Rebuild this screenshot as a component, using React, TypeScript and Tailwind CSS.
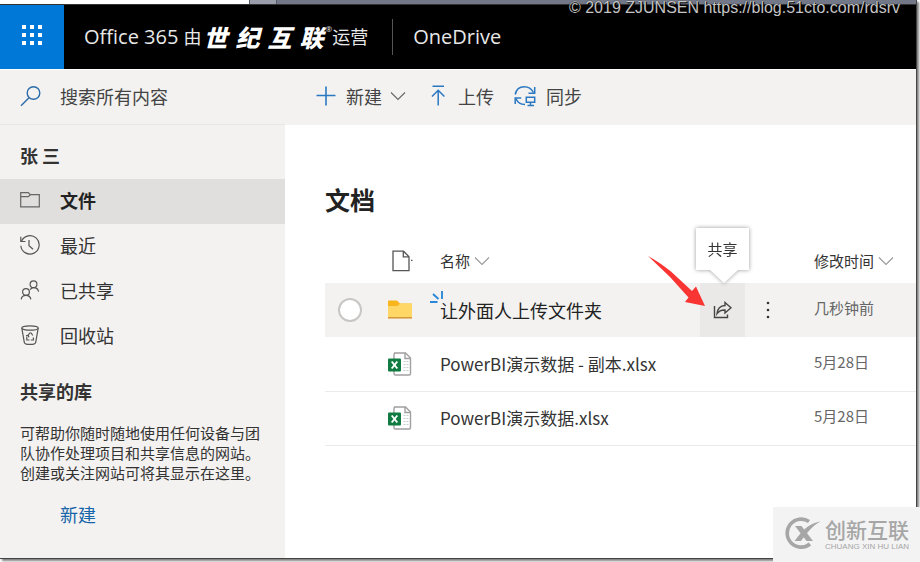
import React from "react";

const cjk = "font-['Noto_Sans_CJK_SC',sans-serif]";
const latin = "font-['Open_Sans','Noto_Sans_CJK_SC',sans-serif]";

function WaffleIcon() {
  return (
    <svg width="20" height="20" viewBox="0 0 20 20" fill="#fff" aria-hidden="true">
      {[0, 8, 16].map((y) => [0, 8, 16].map((x) => <rect key={`${x}-${y}`} x={x} y={y} width="4" height="4" />))}
    </svg>
  );
}

function SearchIcon() {
  return (
    <svg width="22" height="22" viewBox="0 0 22 22" fill="none" stroke="#2b6ca8" strokeWidth="1.4" aria-hidden="true">
      <circle cx="13.5" cy="8" r="6.3" />
      <path d="M9 12.7 1 20.8" />
    </svg>
  );
}

function Chevron({ color }: { color: string }) {
  return (
    <svg width="16" height="10" viewBox="0 0 16 10" fill="none" stroke={color} strokeWidth="1.1" aria-hidden="true">
      <path d="M1 1.5 8 8.5 15 1.5" />
    </svg>
  );
}

function PlusIcon() {
  return (
    <svg width="20" height="20" viewBox="0 0 20 20" stroke="#2b78c2" strokeWidth="1.6" aria-hidden="true">
      <path d="M10 0.5V19.5M0.5 9.5H19.5" />
    </svg>
  );
}

function UploadIcon() {
  return (
    <svg width="16" height="21" viewBox="0 0 16 21" fill="none" stroke="#2b78c2" strokeWidth="1.5" aria-hidden="true">
      <path d="M2.5 1.2H14M8.2 20.5V5.5M2 11.5 8.2 5.2 14.4 11.5" />
    </svg>
  );
}

function SyncIcon() {
  return (
    <svg width="22" height="22" viewBox="0 0 22 22" fill="none" stroke="#2b78c2" strokeWidth="1.5" aria-hidden="true">
      <path d="M1.2 9.5C2.2 4.5 6 1.8 10.3 1.8c4 0 7.2 2 9.2 5.7" />
      <path d="M20.7 2v6.2h-6.2" />
      <path d="M1.2 19v-6h6" />
      <path d="M1.8 13.5c1.6 3.6 4.6 6 9.2 6" />
      <path d="M12.3 12.3h8.4v5h-8.4zM16.5 17.3v3M13.5 20.5h6.5" />
    </svg>
  );
}

function FolderOutline() {
  return (
    <svg width="20" height="20" viewBox="0 0 20 20" fill="none" stroke="#666" strokeWidth="1.2" aria-hidden="true">
      <path d="M.7 2.700h7.600l2 2h9v12.200H.7z" />
      <path d="M.7 6.600h7.600l2-1.900" />
    </svg>
  );
}

function RecentIcon() {
  return (
    <svg width="20" height="20" viewBox="0 0 20 20" fill="none" stroke="#555" strokeWidth="1.2" aria-hidden="true">
      <path d="M1.500 6.200A9.200 9.200 0 1 1 .8 10.800" />
      <path d="M.8 1.800v4.700h4.700" />
      <path d="M9 5v5.700l4 3.600" />
    </svg>
  );
}

function SharedIcon() {
  return (
    <svg width="20" height="20" viewBox="0 0 20 20" fill="none" stroke="#555" strokeWidth="1.2" aria-hidden="true">
      <circle cx="13.500" cy="4.200" r="3.400" />
      <circle cx="6" cy="12" r="3.400" />
      <path d="M1.200 19.400c.3-2.600 2.200-4 4.800-4s4.400 1.400 4.900 4M10.200 9.600c.8-1.300 1.900-2 3.300-2 2.700 0 4.600 1.400 5.100 4" />
    </svg>
  );
}

function RecycleIcon() {
  return (
    <svg width="20" height="20" viewBox="0 0 20 20" fill="none" stroke="#555" strokeWidth="1.2" aria-hidden="true">
      <ellipse cx="10" cy="3" rx="8.200" ry="2.200" />
      <path d="M1.800 3.200 4.300 17.300c.4 2.700 11 2.700 11.400 0L18.200 3.200" />
      <path d="M8 10.500 9.700 8h1.500l1.600 2.500M6.800 12v3h2.700M10.800 15h2.600v-2.500M6 10.800l2.200-.5.7 2" />
    </svg>
  );
}

function DocOutline() {
  return (
    <svg width="22" height="22" viewBox="0 0 22 22" fill="none" stroke="#555" strokeWidth="1.3" aria-hidden="true">
      <path d="M1 1.200h10.500l5.500 5.500v14H1z" />
      <path d="M11.300 1.200v5.700H17" />
      <path d="M19 10.300h1.500" />
    </svg>
  );
}

function FolderIcon() {
  return (
    <svg width="24" height="20" viewBox="0 0 24 20" aria-hidden="true">
      <path d="M0 1.500Q0 .5 1 .5h8l3 3h11q1 0 1 1V15H0z" fill="#f8b51c" />
      <path d="M0 6h9.500l2.500-2.500h11q1 0 1 1V18H0z" fill="#fed766" />
      <path d="M0 17h24v1.600H0z" fill="#d99a3c" />
    </svg>
  );
}

function ExcelIcon() {
  return (
    <svg width="24" height="24" viewBox="0 0 24 24" fill="none" aria-hidden="true">
      <path d="M6 1h11.500l5 5v15.500q0 1.500-1.500 1.500H7.500Q6 23 6 21.500V2.500Q6 1 7.500 1z" fill="#fff" stroke="#a19fa0" strokeWidth="1.400" />
      <path d="M17 1v5.500h5.500" stroke="#a19fa0" strokeWidth="1.400" />
      <path d="M15.500 9.500h2M15.500 12.500h2M15.500 15.500h2M15.500 18.500h2M18.500 9.500h2M18.500 12.500h2M18.500 15.500h2M18.500 18.500h2" stroke="#c5d0ca" />
      <rect x="0" y="6.500" width="13" height="13" rx="1" fill="#107c41" />
      <path d="M3.700 9.500 9.300 16.500M9.300 9.500 3.700 16.500" stroke="#fff" strokeWidth="1.900" />
    </svg>
  );
}

function NewMark() {
  return (
    <svg className="absolute -top-1.5 -left-2.5" width="14" height="16" viewBox="0 0 14 16" stroke="#2b88d8" strokeWidth="1.900" aria-hidden="true">
      <path d="M0 12h7.500M3 4l5.500 5M12 1v8" />
    </svg>
  );
}

function ShareIcon() {
  return (
    <svg width="19" height="18" viewBox="0 0 19 18" fill="none" stroke="#444" strokeWidth="1.400" aria-hidden="true">
      <path d="M1.500 5v11.500h13v-3" />
      <path d="M12 1.500 18 6.700 12 12V9c-3.600-.2-6 1-8 3.700C4.500 8 7 4.800 12 4.500z" />
    </svg>
  );
}

function MoreIcon() {
  return (
    <svg width="4" height="18" viewBox="0 0 4 18" fill="#333" aria-hidden="true">
      <circle cx="2" cy="2" r="1.300" />
      <circle cx="2" cy="9" r="1.300" />
      <circle cx="2" cy="16" r="1.300" />
    </svg>
  );
}

function RedArrow() {
  return (
    <svg className="pointer-events-none absolute -top-7 right-10" width="58" height="52" viewBox="0 0 58 52" aria-hidden="true">
      <path d="M1 1C10 6 17 11 24 16.500L45 36l4-4.500L58 51l-20-4 3.500-4.500L23 22z" fill="#f93534" />
    </svg>
  );
}

const navItems = [
  { label: "文件", icon: <FolderOutline />, active: true },
  { label: "最近", icon: <RecentIcon />, active: false },
  { label: "已共享", icon: <SharedIcon />, active: false },
  { label: "回收站", icon: <RecycleIcon />, active: false },
];

const files = [
  { name: "PowerBI演示数据 - 副本.xlsx", date: "5月28日" },
  { name: "PowerBI演示数据.xlsx", date: "5月28日" },
];

function Header() {
  return (
    <header className={`flex h-16 items-center bg-black text-white ${latin}`}>
      <button type="button" aria-label="应用启动器" className="flex h-16 w-16 items-center justify-center bg-[#0078d7] pb-1">
        <WaffleIcon />
      </button>
      <div className="ml-5 flex items-center text-xl leading-7 text-[#e8e8e8]">
        <span className="whitespace-pre">Office 365 </span>
        <span className="text-lg">由</span>
        <span className={`flex gap-2 pl-0.5 text-2xl leading-7 font-black text-white italic ${cjk}`}>
          <span>世</span>
          <span>纪</span>
          <span>互</span>
          <span>联</span>
        </span>
        <span className="self-start pl-0.5 text-[8px] leading-3">®</span>
        <span className="text-lg">运营</span>
      </div>
      <div className="ml-6 h-9 w-px bg-[#555]" />
      <a href="#onedrive" className="ml-5 text-xl leading-7 text-[#e8e8e8]">OneDrive</a>
    </header>
  );
}

function Sidebar() {
  return (
    <aside className="w-[285px] shrink-0 bg-[#f3f2f1] text-[#333]">
      <label className="flex h-[55px] items-center gap-[18px] border-b border-[#e8e7e6] pb-0.5 pl-5">
        <SearchIcon />
        <input type="text" aria-label="搜索所有内容" placeholder="搜索所有内容" className="w-48 bg-transparent text-lg leading-7 outline-none placeholder:text-[#444]" />
      </label>
      <h2 className="mt-4 mb-2.5 px-5 text-lg leading-7 font-bold">张 三</h2>
      <nav>
        {navItems.map((item) => (
          <a
            key={item.label}
            href="#nav"
            className={
              item.active
                ? "flex h-[45px] items-center gap-5 bg-[#e0dfde] px-5 pb-1 text-lg leading-7 font-bold text-[#222]"
                : "flex h-[45px] items-center gap-5 px-5 pb-1 text-lg leading-7"
            }
          >
            {item.icon}
            {item.label}
          </a>
        ))}
      </nav>
      <h3 className="mt-[18px] px-5 text-lg leading-7 font-bold">共享的库</h3>
      <p className="mt-[18px] px-5 text-[15px] leading-5">
        可帮助你随时随地使用任何设备与团队协作处理项目和共享信息的网站。创建或关注网站可将其显示在这里。
      </p>
      <a href="#new" className="mt-[17px] ml-[60px] inline-block text-lg leading-7 text-[#1565a8]">新建</a>
    </aside>
  );
}

function Toolbar() {
  const button = "flex items-center text-lg leading-7 text-[#444]";
  return (
    <div className="flex h-[55px] items-center bg-[#f3f2f1] pb-1 pl-[31px]">
      <button type="button" className={button}>
        <PlusIcon />
        <span className="pr-2 pl-2.5">新建</span>
        <Chevron color="#666" />
      </button>
      <button type="button" className={`ml-6 gap-3 ${button}`}>
        <UploadIcon />
        上传
      </button>
      <button type="button" className={`ml-5 gap-2.5 ${button}`}>
        <SyncIcon />
        同步
      </button>
    </div>
  );
}

function FileTable() {
  return (
    <table className="w-full table-fixed text-left text-[17px] leading-7 text-[#333]">
      <colgroup>
        <col className="w-[50px]" />
        <col className="w-[50px]" />
        <col />
        <col className="w-[102px]" />
      </colgroup>
      <thead>
        <tr className="h-[44px] text-[15px] leading-5">
          <td />
          <th className="pl-[17px] font-normal" aria-label="类型"><DocOutline /></th>
          <th className="pl-[15px] font-normal">
            <button type="button" className="flex items-center gap-1">名称 <Chevron color="#999" /></button>
          </th>
          <th className="font-normal">
            <button type="button" className="flex items-center gap-1">修改时间 <Chevron color="#999" /></button>
          </th>
        </tr>
      </thead>
      <tbody>
        <tr className="h-[54px] bg-[#f3f2f1]">
          <td className="pl-[13px]">
            <input type="checkbox" aria-label="选择" className="block h-6 w-6 appearance-none rounded-full border-2 border-[#c8c6c4] bg-white" />
          </td>
          <td className="pl-[13px]"><FolderIcon /></td>
          <td className="p-0 pl-[15px]">
            <div className="flex h-[54px] items-center">
              <a href="#folder" className="relative text-lg leading-7 text-[#222]">
                <NewMark />
                让外面人上传文件夹
              </a>
              <div className="relative ml-auto">
                <button type="button" aria-label="共享" className="flex h-[54px] w-[45px] items-center justify-center bg-[#eae9e8]">
                  <ShareIcon />
                </button>
                <RedArrow />
                <div role="tooltip" className="absolute -top-[55px] -left-1 flex h-[42px] w-[53px] items-center justify-center bg-white text-[15px] leading-5 drop-shadow-[0_0_2px_rgba(0,0,0,0.4)]">
                  共享
                  <svg className="absolute top-[42px] left-3.5" width="28" height="13" viewBox="0 0 28 13" aria-hidden="true">
                    <path d="M0 0h28L14 13z" fill="#fff" />
                  </svg>
                </div>
              </div>
              <button type="button" aria-label="更多" className="mr-6 flex h-[54px] w-[45px] items-center justify-center">
                <MoreIcon />
              </button>
            </div>
          </td>
          <td className="pb-1 text-[15px] leading-5 text-[#666]">几秒钟前</td>
        </tr>
        {files.map((file) => (
          <tr key={file.name} className="h-[54px] border-b border-[#edebe9]">
            <td />
            <td className="pl-[13px]"><ExcelIcon /></td>
            <td className="pl-[15px]"><a href="#file">{file.name}</a></td>
            <td className="pb-1 text-[15px] leading-5 text-[#666]">{file.date}</td>
          </tr>
        ))}
      </tbody>
    </table>
  );
}

function SiteBadge() {
  return (
    <div className="absolute right-0 bottom-0 flex h-[55px] w-[147px] items-center gap-1 bg-[#f3f3f3] pb-1 pl-3 text-[#a6a6a6]">
      <svg width="36" height="34" viewBox="0 0 36 34" fill="none" aria-hidden="true">
        <path d="M24 5.500A14 14 0 1 0 25 28" stroke="#a6a6a6" strokeWidth="3.600" />
        <path d="M10 10h6.500L28 25h-6.500z" fill="#a6a6a6" />
        <path d="M9.500 25h6.500C22 17 27 10 35.500 5.500 26 7 20 11 9.500 25z" fill="#a6a6a6" />
      </svg>
      <div className="whitespace-nowrap">
        <div className="text-[21px] leading-7 font-medium">创新互联</div>
        <div className="font-['Liberation_Sans',sans-serif] text-[8px] leading-2">CHUANG XIN HU LIAN</div>
      </div>
    </div>
  );
}

export default function App() {
  return (
    <div className={`relative flex min-h-screen flex-col overflow-hidden bg-white pr-[3px] pb-[3px] ${cjk}`}>
      <div className="flex grow flex-col border-r border-b border-[#444] bg-white shadow-[2px_2px_2px_rgba(0,0,0,0.5)]">
        <div className="flex h-[5px] border-b border-[#333]">
          <div className="w-[249px] bg-white" />
          <div className="w-7 border-x border-[#555a68] bg-[#9a9daa]" />
          <div className="grow bg-[#737888]" />
        </div>
        <Header />
        <div className="flex grow border-t border-white">
          <Sidebar />
          <div className="min-w-0 grow">
            <Toolbar />
            <main className="pl-10">
              <h1 className="pt-[58px] pb-6 text-[25px] leading-8 font-bold text-[#222]">文档</h1>
              <FileTable />
            </main>
          </div>
        </div>
      </div>
      <div className="absolute top-0 right-5 font-['Liberation_Sans',sans-serif] text-base leading-4 text-[#c4c4c4] [text-shadow:0_0_1px_#000,1px_1px_0_#000]">
        © 2019 ZJUNSEN https://blog.51cto.com/rdsrv
      </div>
      <SiteBadge />
    </div>
  );
}
